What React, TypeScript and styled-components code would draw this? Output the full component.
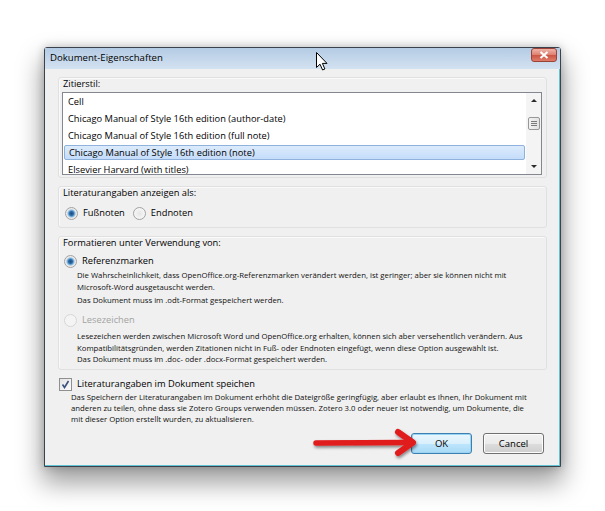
import React from "react";
import styled, { createGlobalStyle } from "styled-components";

const GlobalStyle = createGlobalStyle`
  html, body { margin: 0; padding: 0; background: #fff; }
  body { font-family: "Segoe UI", "Open Sans", "Noto Sans", sans-serif; color: #000; }
`;

const Stage = styled.div`
  position: relative;
  width: 605px;
  height: 511px;
  padding: 47px 0 0 44px;
  box-sizing: border-box;
  overflow: hidden;
`;

const Window = styled.div`
  width: 517px;
  height: 420px;
  box-sizing: border-box;
  border: 1px solid #3a434d;
  border-radius: 3px 3px 0 0;
  background: #f0f0f0;
  box-shadow: inset -1px -1px 0 #62c3d3, 0 14px 26px 2px rgba(0, 0, 0, 0.38),
    0 0 10px rgba(0, 0, 0, 0.22);
  display: flex;
  flex-direction: column;
`;

const TitleBar = styled.div`
  height: 21px;
  display: flex;
  justify-content: space-between;
  background: linear-gradient(#b4cbe4, #d3e2f1);
  padding-left: 5px;
`;

const Title = styled.span`
  font-size: 9.6px;
  line-height: 19px;
`;

const CloseButton = styled.div`
  width: 26px;
  height: 14px;
  margin-right: 3px;
  box-sizing: border-box;
  border: 1px solid #9a4336;
  border-radius: 3px;
  background: linear-gradient(#efb4a8, #dd8070 50%, #cc5442 51%, #de7d6a);
  display: flex;
  align-items: center;
  justify-content: center;
`;

const Content = styled.div`
  flex: 1;
  display: flex;
  flex-direction: column;
  padding: 8px 13px 11px 13px;
`;

const Group = styled.div<{ $pb: number; $mt?: number }>`
  border: 1px solid #e0e0e0;
  border-radius: 3px;
  box-shadow: inset 1px 1px 0 #fafafa;
  padding: 0 3px ${(p) => p.$pb}px 3px;
  margin-top: ${(p) => p.$mt ?? 0}px;
  display: flex;
  flex-direction: column;
`;

const Caption = styled.div`
  font-size: 9.3px;
  line-height: 12px;
  padding-left: 1px;
`;

const ListBox = styled.div`
  margin-top: 2px;
  height: 83px;
  width: 480px;
  box-sizing: border-box;
  border: 1px solid #828790;
  background: #fff;
  display: flex;
`;

const Items = styled.div`
  flex: 1;
  overflow: hidden;
`;

const Item = styled.div<{ $selected?: boolean }>`
  font-size: 9.3px;
  white-space: nowrap;
  ${(p) =>
    p.$selected
      ? `margin: 1px 1px; padding-left: 4px;
         border: 1px solid #8fb2dc; border-radius: 2px; box-sizing: border-box;
         height: 15px; line-height: 13px;
         background: linear-gradient(#dcebfc, #c4dcfa);`
      : `height: 17px; line-height: 17px; padding-left: 5px;`}
`;

const ScrollBar = styled.div`
  width: 15px;
  background: #f4f4f4;
  display: flex;
  flex-direction: column;
  align-items: center;
`;

const ScrollArrow = styled.div<{ $down?: boolean }>`
  height: 15px;
  width: 15px;
  display: flex;
  align-items: center;
  justify-content: center;
  &::after {
    content: "";
    border-left: 3px solid transparent;
    border-right: 3px solid transparent;
    ${(p) =>
      p.$down ? "border-top: 3px solid #2b2b2b;" : "border-bottom: 3px solid #2b2b2b;"}
  }
`;

const Track = styled.div`
  flex: 1;
  width: 100%;
  padding-top: 9px;
  box-sizing: border-box;
  display: flex;
  justify-content: center;
`;

const Thumb = styled.div`
  width: 12px;
  height: 13px;
  box-sizing: border-box;
  border: 1px solid #979797;
  border-radius: 2px;
  background: linear-gradient(90deg, #f2f2f2, #e3e3e3);
  display: flex;
  flex-direction: column;
  align-items: center;
  justify-content: center;
  gap: 1px;
`;

const Grip = styled.div`
  width: 6px;
  height: 1px;
  background: #7a7a7a;
`;

const OptionRow = styled.div<{ $mt: number; $ml: number; $gap?: number }>`
  display: flex;
  align-items: center;
  height: 16px;
  margin-top: ${(p) => p.$mt}px;
  margin-left: ${(p) => p.$ml}px;
  gap: ${(p) => p.$gap ?? 0}px;
`;

const Option = styled.label<{ $disabled?: boolean }>`
  display: flex;
  align-items: center;
  gap: 5px;
  font-size: 9.3px;
  line-height: 16px;
  color: ${(p) => (p.$disabled ? "#a3a3a3" : "#000")};
`;

const Radio = styled.span<{ $checked?: boolean; $disabled?: boolean }>`
  width: 13px;
  height: 13px;
  box-sizing: border-box;
  border-radius: 50%;
  border: 1px solid ${(p) => (p.$disabled ? "#d6d6d6" : "#a2a2a2")};
  background: ${(p) =>
    p.$checked
      ? "radial-gradient(circle, #1d4c7c 0, #2d6ca8 2px, #8cc0e6 3.5px, #e6e6e6 4.5px, #f6f6f6 6px)"
      : p.$disabled
      ? "#f4f4f4"
      : "radial-gradient(circle, #e6e6e6 0, #f8f8f8 6px)"};
`;

const Check = styled.span`
  width: 13px;
  height: 13px;
  box-sizing: border-box;
  border: 1px solid #8e8f8f;
  background: linear-gradient(135deg, #e4e4e4, #fbfbfb);
  display: flex;
  align-items: center;
  justify-content: center;
`;

const Desc = styled.div<{ $pl: number; $lh: number; $mt?: number }>`
  font-size: 7.75px;
  line-height: ${(p) => p.$lh}px;
  padding-left: ${(p) => p.$pl}px;
  padding-right: 2px;
  margin-top: ${(p) => p.$mt ?? 0}px;
  color: #111;
`;

const ButtonRow = styled.div`
  display: flex;
  justify-content: flex-end;
  gap: 11px;
  margin-top: 8px;
  padding-right: 3px;
`;

const Button = styled.button<{ $default?: boolean }>`
  width: 61px;
  height: 21px;
  padding: 0;
  font-family: inherit;
  font-size: 9.5px;
  color: #000;
  border-radius: 3px;
  border: 1px solid ${(p) => (p.$default ? "#3c7fb1" : "#707070")};
  background: ${(p) =>
    p.$default
      ? "linear-gradient(#eaf6fd, #d9f0fc 50%, #bee6fd 51%, #a7d9f5)"
      : "linear-gradient(#f2f2f2, #ebebeb 50%, #dddddd 51%, #cfcfcf)"};
  box-shadow: inset 0 0 0 1px ${(p) => (p.$default ? "#9ad4f3" : "#fcfcfc")};
`;

const Overlay = styled.svg<{ $left: number; $top: number }>`
  position: absolute;
  left: ${(p) => p.$left}px;
  top: ${(p) => p.$top}px;
  overflow: visible;
`;

const styles = [
  "Cell",
  "Chicago Manual of Style 16th edition (author-date)",
  "Chicago Manual of Style 16th edition (full note)",
  "Chicago Manual of Style 16th edition (note)",
  "Elsevier Harvard (with titles)",
];

export default function App() {
  return (
    <Stage>
      <GlobalStyle />
      <Window>
        <TitleBar>
          <Title>Dokument-Eigenschaften</Title>
          <CloseButton>
            <svg width="10" height="8" viewBox="0 0 10 8">
              <path d="M1.5 1 L8.5 7 M8.5 1 L1.5 7" stroke="#fff" strokeWidth="2" />
            </svg>
          </CloseButton>
        </TitleBar>
        <Content>
          <Group $pb={2}>
            <Caption>Zitierstil:</Caption>
            <ListBox>
              <Items>
                {styles.map((s, i) => (
                  <Item key={s} $selected={i === 3}>
                    {s}
                  </Item>
                ))}
              </Items>
              <ScrollBar>
                <ScrollArrow />
                <Track>
                  <Thumb>
                    <Grip />
                    <Grip />
                    <Grip />
                  </Thumb>
                </Track>
                <ScrollArrow $down />
              </ScrollBar>
            </ListBox>
          </Group>

          <Group $pb={6} $mt={8}>
            <Caption>Literaturangaben anzeigen als:</Caption>
            <OptionRow $mt={6} $ml={3} $gap={8}>
              <Option>
                <Radio $checked />
                Fußnoten
              </Option>
              <Option>
                <Radio />
                Endnoten
              </Option>
            </OptionRow>
          </Group>

          <Group $pb={3.5} $mt={8}>
            <Caption>Formatieren unter Verwendung von:</Caption>
            <OptionRow $mt={4} $ml={2}>
              <Option>
                <Radio $checked />
                Referenzmarken
              </Option>
            </OptionRow>
            <Desc $pl={15} $lh={12}>
              Die Wahrscheinlichkeit, dass OpenOffice.org-Referenzmarken verändert werden, ist
              geringer; aber sie können nicht mit Microsoft-Word ausgetauscht werden.
            </Desc>
            <Desc $pl={15} $lh={12} $mt={1}>
              Das Dokument muss im .odt-Format gespeichert werden.
            </Desc>
            <OptionRow $mt={6} $ml={2}>
              <Option $disabled>
                <Radio $disabled />
                Lesezeichen
              </Option>
            </OptionRow>
            <Desc $pl={15} $lh={11.5} $mt={3}>
              Lesezeichen werden zwischen Microsoft Word und OpenOffice.org erhalten, können sich
              aber versehentlich verändern. Aus Kompatibilitätsgründen, werden Zitationen nicht in
              Fuß- oder Endnoten eingefügt, wenn diese Option ausgewählt ist.
            </Desc>
            <Desc $pl={15} $lh={11.5}>
              Das Dokument muss im .doc- oder .docx-Format gespeichert werden.
            </Desc>
          </Group>

          <OptionRow $mt={6} $ml={1}>
            <Option>
              <Check>
                <svg width="9" height="9" viewBox="0 0 9 9">
                  <path
                    d="M1.5 4.5 L3.5 7.5 L7.5 1"
                    stroke="#3b4f7e"
                    strokeWidth="1.6"
                    fill="none"
                  />
                </svg>
              </Check>
              Literaturangaben im Dokument speichen
            </Option>
          </OptionRow>
          <Desc $pl={13} $lh={11}>
            Das Speichern der Literaturangaben im Dokument erhöht die Dateigröße geringfügig, aber
            erlaubt es Ihnen, Ihr Dokument mit
            <br />
            anderen zu teilen, ohne dass sie Zotero Groups verwenden müssen. Zotero 3.0 oder neuer
            ist notwendig, um Dokumente, die
            <br />
            mit dieser Option erstellt wurden, zu aktualisieren.
          </Desc>

          <ButtonRow>
            <Button $default>OK</Button>
            <Button>Cancel</Button>
          </ButtonRow>
        </Content>
      </Window>

      <Overlay $left={305} $top={425} width="120" height="36" viewBox="0 0 120 36">
        <defs>
          <filter id="arrowShadow" x="-20%" y="-50%" width="140%" height="200%">
            <feDropShadow dx="1" dy="2" stdDeviation="1.5" floodColor="#000" floodOpacity="0.45" />
          </filter>
        </defs>
        <g filter="url(#arrowShadow)" stroke="#e01b1b" strokeLinecap="round" strokeLinejoin="round" fill="none">
          <path d="M11 18 L104 17.5" strokeWidth="5.5" />
          <path d="M93 7 L108 17.5 L93 28" strokeWidth="6" />
        </g>
      </Overlay>

      <Overlay $left={316} $top={52} width="13" height="19" viewBox="0 0 13 19">
        <path
          d="M0.5 0.5 L0.5 15.5 L4 12.2 L6.6 18 L8.9 17 L6.4 11.4 L11 11.4 Z"
          fill="#fff"
          stroke="#000"
          strokeWidth="1"
        />
      </Overlay>
    </Stage>
  );
}
